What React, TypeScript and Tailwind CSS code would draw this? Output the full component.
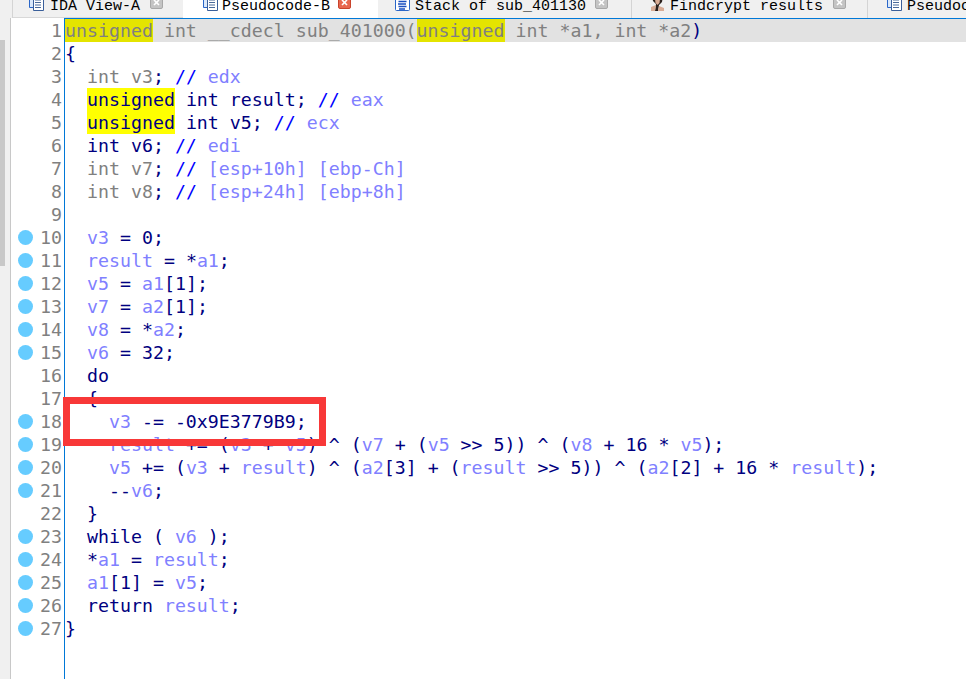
const MONO = "font-['DejaVu_Sans_Mono',monospace]";

type Tok = [string, string];

const G = "text-[#808080]";
const N = "text-[#000080]";
const C = "text-[#0000ff]";
const V = "text-[#8080ff]";
const Y = "text-[#000080] bg-[#ffff00]";
const Y1 = "text-[#808080] bg-[#e4e400]";

// plain statements get coloured by identifier
function tokens(src: string): Tok[] {
  return src
    .split(/\b(v3|v5|v6|v7|v8|a1|a2|result)\b/)
    .map((part, i): Tok => [i % 2 ? V : N, part])
    .filter((t) => t[1] !== "");
}

const lines: Tok[][] = [
  [[Y1, "unsigned"], [G, " int __cdecl sub_401000("], [Y1, "unsigned"], [G, " int *a1, int *a2"], [N, ")"]],
  [[N, "{"]],
  [[G, "  int v3"], [N, ";"], [C, " // "], [V, "edx"]],
  [[N, "  "], [Y, "unsigned"], [N, " int result;"], [C, " // "], [V, "eax"]],
  [[N, "  "], [Y, "unsigned"], [N, " int v5;"], [C, " // "], [V, "ecx"]],
  [[N, "  int v6;"], [C, " // "], [V, "edi"]],
  [[G, "  int v7"], [N, ";"], [C, " // "], [V, "[esp+10h] [ebp-Ch]"]],
  [[G, "  int v8"], [N, ";"], [C, " // "], [V, "[esp+24h] [ebp+8h]"]],
  [],
  tokens("  v3 = 0;"),
  tokens("  result = *a1;"),
  tokens("  v5 = a1[1];"),
  tokens("  v7 = a2[1];"),
  tokens("  v8 = *a2;"),
  tokens("  v6 = 32;"),
  tokens("  do"),
  tokens("  {"),
  tokens("    v3 -= -0x9E3779B9;"),
  tokens("    result += (v3 + v5) ^ (v7 + (v5 >> 5)) ^ (v8 + 16 * v5);"),
  tokens("    v5 += (v3 + result) ^ (a2[3] + (result >> 5)) ^ (a2[2] + 16 * result);"),
  tokens("    --v6;"),
  tokens("  }"),
  tokens("  while ( v6 );"),
  tokens("  *a1 = result;"),
  tokens("  a1[1] = v5;"),
  tokens("  return result;"),
  tokens("}"),
];

const dotted = [10, 11, 12, 13, 14, 15, 18, 19, 20, 21, 23, 24, 25, 26, 27];

function DocIcon() {
  return (
    <svg width="15" height="15" viewBox="0 0 15 15" className="mb-[3px] shrink-0">
      <path d="M0.5 1.5h4v10h-4z" fill="#dbe9fb" stroke="#2a66c8" />
      <path d="M4.5 0.5h8l2 2v12h-10z" fill="#fff" stroke="#3a5f9a" />
      <path d="M6 4h6M6 6.5h6M6 9h6M6 11.5h6" stroke="#4a6a9a" />
    </svg>
  );
}

function StackIcon() {
  return (
    <svg width="15" height="15" viewBox="0 0 15 15" className="mb-[3px] shrink-0">
      <rect x="0.5" y="0.5" width="14" height="14" rx="1" fill="#fff" stroke="#2a66c8" />
      <path d="M4 3h8M3.5 5.5h8M3 8h8M3.5 10.5h8M4 13h6" stroke="#1a4fc0" strokeWidth="1.6" />
    </svg>
  );
}

function FaceIcon() {
  return (
    <svg width="15" height="15" viewBox="0 0 15 15" className="mb-[3px] shrink-0">
      <path d="M2 0h11l-1 6-3 3-1 6H5l1-7-3-3z" fill="#2b201c" />
      <path d="M5 3h5l-.5 4-2 2-2-2zM1 11l5-2-1 6H1zM9 10l5 2v3H8z" fill="#d8ab94" />
    </svg>
  );
}

function CloseBtn({ active, cls }: { active?: boolean; cls: string }) {
  return (
    <span
      className={
        "mb-[5px] flex h-[13px] w-[13px] shrink-0 items-center justify-center rounded-[2px] border " + cls + " " +
        (active ? "border-[#c9442c] bg-[#e8674f]" : "border-[#a8a8a8] bg-[#c4c4c4]")
      }
    >
      <svg width="7" height="7" viewBox="0 0 7 7">
        <path d="M1 1l5 5M6 1l-5 5" stroke="#fff" strokeWidth="1.6" />
      </svg>
    </span>
  );
}

function TabTitle({ title }: { title: string }) {
  return (
    <span className="whitespace-nowrap font-['Liberation_Mono',monospace] text-[15px] leading-[15px] text-black">{title}</span>
  );
}

export default function App() {
  return (
    <div className={"relative flex h-screen w-full flex-col overflow-hidden bg-white " + MONO}>
      {/* tab strip, top is cut off in the shot */}
      <div className="flex h-[18px] shrink-0 overflow-hidden bg-[#f0f0f0]">
        <div className="w-[13px] shrink-0 border-r border-[#d4d4d4]" />
        <div className="flex h-full w-[170px] shrink-0 items-end gap-[6px] border-b border-[#d8d8d8] pb-[3px] pl-[16px]">
          <DocIcon />
          <TabTitle title="IDA View-A" />
          <CloseBtn cls="ml-[4px]" />
        </div>
        <div className="flex h-full w-[195px] shrink-0 items-end gap-[4px] bg-white pb-[4px] pl-[20px]">
          <DocIcon />
          <TabTitle title="Pseudocode-B" />
          <CloseBtn active cls="ml-[4px]" />
        </div>
        <div className="flex h-full w-[254px] shrink-0 items-end gap-[5px] border-r border-[#d4d4d4] pb-[4px] pl-[17px]">
          <StackIcon />
          <TabTitle title="Stack of sub_401130" />
          <CloseBtn cls="ml-[4px]" />
        </div>
        <div className="flex h-full w-[236px] shrink-0 items-end gap-[5px] border-r border-[#d4d4d4] pb-[4px] pl-[18px]">
          <FaceIcon />
          <TabTitle title="Findcrypt results" />
          <CloseBtn cls="ml-[5px]" />
        </div>
        <div className="flex h-full shrink-0 items-end gap-[5px] pb-[4px] pl-[19px]">
          <DocIcon />
          <TabTitle title="Pseudocode-A" />
        </div>
      </div>

      <div className="flex min-h-0 flex-1">
        {/* left edge scrollbar */}
        <div className="flex w-[11px] shrink-0 border-r border-[#c8c8c8] bg-[#f0f0f0]">
          <div className="mt-[22px] h-[226px] w-[5px] bg-[#c8c8c8]" />
        </div>

        {/* line numbers */}
        <div className="flex w-[54px] shrink-0 flex-col border-r border-[#0078d7] pt-[1px] pr-[2px]">
          {lines.map((_, i) => (
            <div key={i} className="flex h-[23px] items-center justify-end text-[18.25px] leading-[23px] text-[#808080]">
              {dotted.includes(i + 1) && (
                <span className="mr-auto ml-[7px] h-[15px] w-[15px] rounded-full bg-[#66ccff]" />
              )}
              <span>{i + 1}</span>
            </div>
          ))}
        </div>

        {/* code */}
        <div className="min-w-0 flex-1 border-t border-[#0078d7]">
          {lines.map((toks, i) => (
            <div
              key={i}
              className={"h-[23px] whitespace-pre text-[18.25px] leading-[23px] " + (i === 0 ? "bg-[#e2e2e2]" : "")}
            >
              {toks.map((t, j) => (
                <span key={j} className={t[0] + " inline-block h-[23px]"}>{t[1]}</span>
              ))}
            </div>
          ))}
        </div>
      </div>

      {/* red annotation box */}
      <div className="absolute left-[63px] top-[397px] h-[49px] w-[263px] border-[7px] border-[#f83838]" />
    </div>
  );
}
